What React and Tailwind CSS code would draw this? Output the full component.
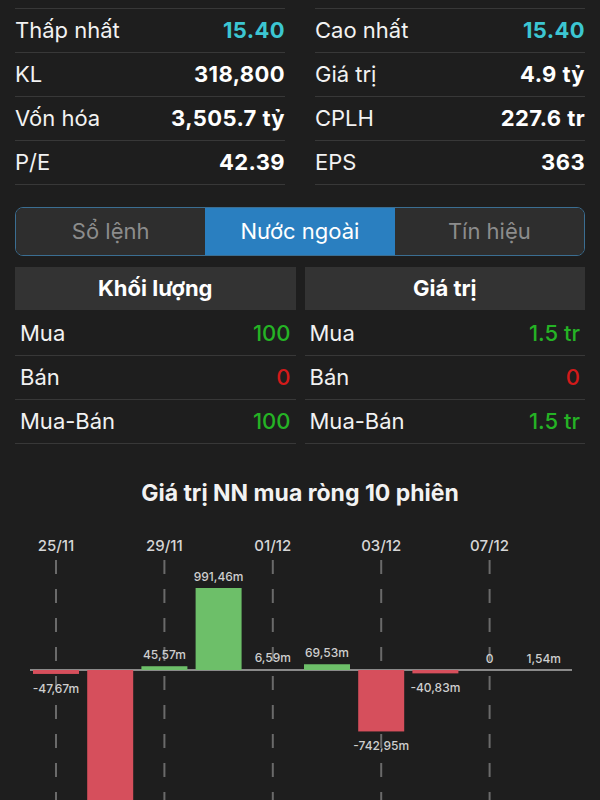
import React from "react";

const statsLeft = [
  { label: "Thấp nhất", value: "15.40", color: "text-[#3cc6d2]" },
  { label: "KL", value: "318,800" },
  { label: "Vốn hóa", value: "3,505.7 tỷ" },
  { label: "P/E", value: "42.39" },
];

const statsRight = [
  { label: "Cao nhất", value: "15.40", color: "text-[#3cc6d2]" },
  { label: "Giá trị", value: "4.9 tỷ" },
  { label: "CPLH", value: "227.6 tr" },
  { label: "EPS", value: "363" },
];

const volumeRows = [
  { label: "Mua", value: "100", color: "text-[#25b325]" },
  { label: "Bán", value: "0", color: "text-[#d21a1a]" },
  { label: "Mua-Bán", value: "100", color: "text-[#25b325]" },
];

const valueRows = [
  { label: "Mua", value: "1.5 tr", color: "text-[#25b325]" },
  { label: "Bán", value: "0", color: "text-[#d21a1a]" },
  { label: "Mua-Bán", value: "1.5 tr", color: "text-[#25b325]" },
];

// net foreign buy value, 10 sessions (million VND)
const sessions = [
  { v: -47.67, label: "-47,67m", date: "25/11" },
  { v: -1920.4, label: "-1.920,4m" },
  { v: 45.57, label: "45,57m", date: "29/11" },
  { v: 991.46, label: "991,46m" },
  { v: 6.59, label: "6,59m", date: "01/12" },
  { v: 69.53, label: "69,53m" },
  { v: -742.95, label: "-742,95m", date: "03/12" },
  { v: -40.83, label: "-40,83m" },
  { v: 0, label: "0", date: "07/12" },
  { v: 1.54, label: "1,54m" },
];

function StatColumn({ rows }) {
  return (
    <div className="border-t border-[#383838]">
      {rows.map((r) => (
        <div
          key={r.label}
          className="h-[44px] flex items-center justify-between border-b border-[#383838]"
        >
          <span className="text-[22px] text-[#f2f2f2]">{r.label}</span>
          <span className={`text-[22px] font-bold tracking-[0.4px] ${r.color || "text-white"}`}>
            {r.value}
          </span>
        </div>
      ))}
    </div>
  );
}

function ForeignColumn({ title, rows }) {
  return (
    <div>
      <div className="h-[43px] bg-[#333333] flex items-center justify-center text-[22px] font-bold text-white">
        {title}
      </div>
      <div className="mt-[2px]">
        {rows.map((r) => (
          <div
            key={r.label}
            className="h-[44px] px-[5px] flex items-center justify-between border-b border-[#383838]"
          >
            <span className="text-[22px] text-[#f2f2f2]">{r.label}</span>
            <span className={`text-[22px] font-medium ${r.color}`}>{r.value}</span>
          </div>
        ))}
      </div>
    </div>
  );
}

function NetChart() {
  const zero = 140;
  const scale = 82 / 991.46;
  const step = 54.2;
  const barW = 46;

  return (
    <svg width="600" height="270" viewBox="0 0 600 270">
      {sessions.map((s, i) => {
        const cx = 56 + step * i;
        if (!s.date) return null;
        return (
          <g key={"d" + i}>
            <text
              x={cx}
              y={21}
              textAnchor="middle"
              fontSize="15"
              fontWeight="500"
              fill="#d6d6d6"
            >
              {s.date}
            </text>
            <line
              x1={cx}
              x2={cx}
              y1={30}
              y2={270}
              stroke="#6a6a6a"
              strokeWidth="2"
              strokeDasharray="14 15"
            />
          </g>
        );
      })}

      <line x1={30} x2={572} y1={zero} y2={zero} stroke="#8a8a8a" strokeWidth="2" />

      {sessions.map((s, i) => {
        const cx = 56 + step * i;
        const h = Math.abs(s.v) * scale;
        const up = s.v >= 0;
        const y = up ? zero - h : zero;
        const labelY = up ? zero - h - 7 : zero + h + 19;
        return (
          <g key={"b" + i}>
            {h > 0.8 && (
              <rect
                x={cx - barW / 2}
                y={y}
                width={barW}
                height={h}
                fill={up ? "#6dbf69" : "#d64f5c"}
              />
            )}
            {labelY < 262 && (
              <text
                x={cx}
                y={labelY}
                textAnchor="middle"
                fontSize="12"
                fontWeight="500"
                fill="#cfcfcf"
              >
                {s.label}
              </text>
            )}
          </g>
        );
      })}
    </svg>
  );
}

export default function App() {
  return (
    <div className="w-[600px] h-[800px] overflow-hidden bg-[#1e1e1e] text-white font-['Inter','Liberation_Sans',sans-serif]">
      <div className="pt-2 px-[15px] grid grid-cols-2 gap-x-[30px]">
        <StatColumn rows={statsLeft} />
        <StatColumn rows={statsRight} />
      </div>

      <div className="mt-[22px] mx-[15px] h-[49px] flex rounded-[8px] border border-[#3b6e92] overflow-hidden">
        <div className="flex-1 bg-[#2e2e2e] flex items-center justify-center text-[22px] text-[#8c8c8c]">
          Sổ lệnh
        </div>
        <div className="flex-1 bg-[#2a7fc0] flex items-center justify-center text-[22px] text-white">
          Nước ngoài
        </div>
        <div className="flex-1 bg-[#2e2e2e] flex items-center justify-center text-[22px] text-[#8c8c8c]">
          Tín hiệu
        </div>
      </div>

      <div className="mt-[11px] px-[15px] grid grid-cols-2 gap-x-[9px]">
        <ForeignColumn title="Khối lượng" rows={volumeRows} />
        <ForeignColumn title="Giá trị" rows={valueRows} />
      </div>

      <div className="mt-[36px] h-[26px] flex items-center justify-center text-[23px] font-bold text-[#f2f2f2]">
        Giá trị NN mua ròng 10 phiên
      </div>

      <div className="mt-[24px]">
        <NetChart />
      </div>
    </div>
  );
}
